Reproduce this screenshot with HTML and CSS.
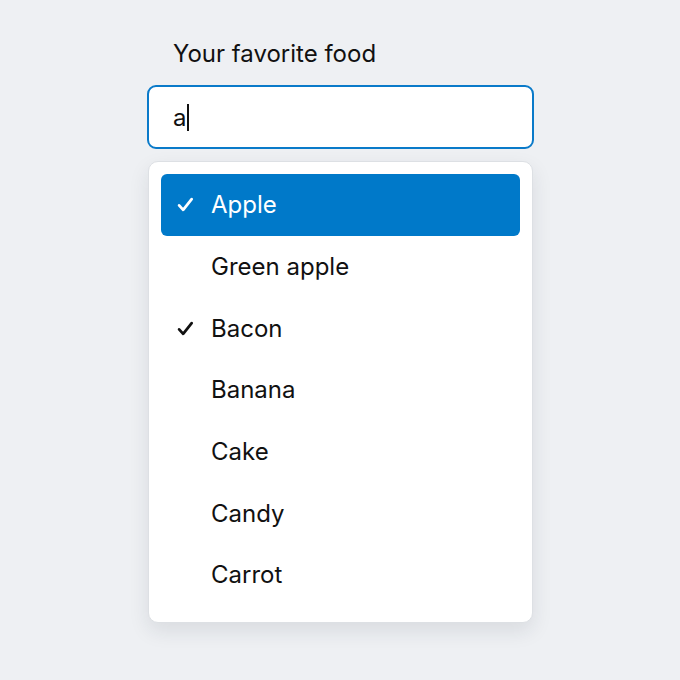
FILE: index.html
```html
<!DOCTYPE html>
<html>
<head>
<meta charset="utf-8">
<link rel="stylesheet" href="styles.css">
</head>
<body>
<div class="field">
  <label class="label">Your favorite food</label>
  <div class="input"><span class="value">a</span><span class="caret"></span></div>
  <ul class="list">
    <li class="item selected"><span class="check"><svg viewBox="0 0 16 16" width="17" height="17"><path d="M2 8.8l3.8 4.2 8-10" fill="none" stroke="currentColor" stroke-width="2.6" stroke-linecap="round" stroke-linejoin="round"/></svg></span>Apple</li>
    <li class="item"><span class="check"></span>Green apple</li>
    <li class="item"><span class="check"><svg viewBox="0 0 16 16" width="17" height="17"><path d="M2 8.8l3.8 4.2 8-10" fill="none" stroke="currentColor" stroke-width="2.6" stroke-linecap="round" stroke-linejoin="round"/></svg></span>Bacon</li>
    <li class="item"><span class="check"></span>Banana</li>
    <li class="item"><span class="check"></span>Cake</li>
    <li class="item"><span class="check"></span>Candy</li>
    <li class="item"><span class="check"></span>Carrot</li>
  </ul>
</div>
</body>
</html>
```
FILE: styles.css
```css
html, body {
  margin: 0;
  padding: 0;
  background: #eef0f3;
  width: 680px;
  height: 680px;
  font-family: Inter, "Noto Sans", sans-serif;
  color: #111;
}
.field {
  width: 387px;
  margin: 0 auto;
  padding-top: 38px;
  display: flex;
  flex-direction: column;
  position: relative;
  left: 0.5px;
}
.label {
  font-size: 24px;
  line-height: 32px;
  padding-left: 26px;
  margin-bottom: 15px;
}
.input {
  height: 60px;
  border: 2px solid #0a7ac9;
  border-radius: 9px;
  background: #fff;
  display: flex;
  align-items: center;
  padding-left: 24px;
  font-size: 24px;
}
.caret {
  width: 1.5px;
  height: 27px;
  background: #111;
  margin-left: 1px;
}
.list {
  list-style: none;
  margin: 12px 1px 0;
  padding: 12px 12px 16px;
  background: #fff;
  border: 1px solid #dde0e4;
  border-radius: 10px;
  box-shadow: 0 8px 20px rgba(30, 40, 60, 0.10);
}
.item {
  height: 61.7px;
  display: flex;
  align-items: center;
  font-size: 24px;
  border-radius: 6px;
  padding-left: 16px;
}
.item.selected {
  background: #0079c9;
  color: #fff;
}
.check {
  width: 34px;
  display: flex;
  align-items: center;
}
```
